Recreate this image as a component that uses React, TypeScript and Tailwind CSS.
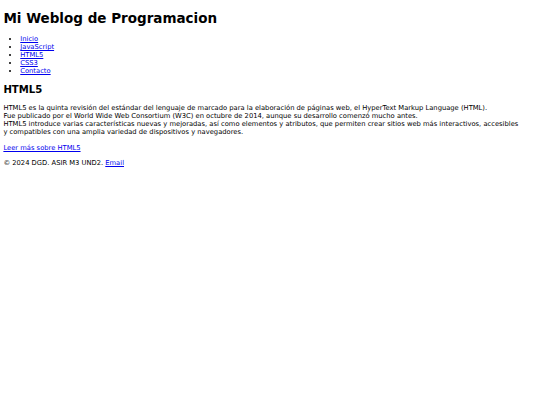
const links = ['Inicio', 'JavaScript', 'HTML5', 'CSS3', 'Contacto'];

function A({ children }: { children: React.ReactNode }) {
    return (
        <a href="#" className="text-[#0000ee] underline">
            {children}
        </a>
    );
}

export default function App() {
    return (
        <div className="min-h-[405px] bg-white p-[3.375px] font-['DejaVu_Sans',sans-serif] text-[6.75px] leading-[normal] text-black">
            <header>
                <h1 className="mt-[7px] mb-[9px] text-[13.5px] font-bold">Mi Weblog de Programacion</h1>
                <nav>
                    <ul className="my-[6.75px] list-disc pl-[16.875px]">
                        {links.map((l) => (
                            <li key={l}>
                                <A>{l}</A>
                            </li>
                        ))}
                    </ul>
                </nav>
            </header>

            <main>
                <article>
                    <h2 className="mt-[8.4px] mb-[9.4px] text-[10.125px] font-bold">HTML5</h2>
                    <p className="my-[6.75px]">
                        HTML5 es la quinta revisión del estándar del lenguaje de marcado para la elaboración de
                        páginas web, el HyperText Markup Language (HTML).
                        <br />
                        Fue publicado por el World Wide Web Consortium (W3C) en octubre de 2014, aunque su desarrollo
                        comenzó mucho antes.
                        <br />
                        HTML5 introduce varias características nuevas y mejoradas, así como elementos y atributos, que
                        permiten crear sitios web más interactivos, accesibles
                        <br />
                        y compatibles con una amplia variedad de dispositivos y navegadores.
                    </p>
                    <p className="my-[7.5px]">
                        <A>Leer más sobre HTML5</A>
                    </p>
                </article>
            </main>

            <footer>
                <p className="my-[6.75px]">
                    © 2024 DGD. ASIR M3 UND2. <A>Email</A>
                </p>
            </footer>
        </div>
    );
}
